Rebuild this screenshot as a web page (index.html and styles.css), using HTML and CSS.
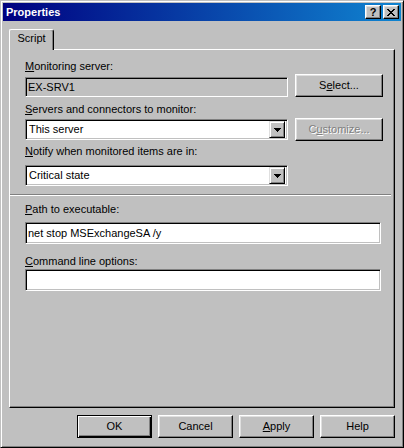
FILE: index.html
```html
<!DOCTYPE html>
<html>
<head>
<meta charset="utf-8">
<title>Properties</title>
<link rel="stylesheet" href="styles.css">
</head>
<body>
<div class="window">
  <div class="titlebar">
    <span class="title">Properties</span>
    <div class="caption-btns">
      <span class="cbtn help">?</span>
      <span class="cbtn close">
        <svg width="8" height="7" viewBox="0 0 8 7" shape-rendering="crispEdges"><path d="M0 0h2v1h-2zM6 0h2v1h-2zM1 1h2v1h-2zM5 1h2v1h-2zM2 2h4v1h-4zM3 3h2v1h-2zM2 4h4v1h-4zM1 5h2v1h-2zM5 5h2v1h-2zM0 6h2v1h-2zM6 6h2v1h-2z" fill="#000"/></svg>
      </span>
    </div>
  </div>
  <div class="client">
    <div class="tabs"><div class="tab">Script</div></div>
    <div class="panel">
      <div class="label l1"><u>M</u>onitoring server:</div>
      <div class="row r1">
        <div class="field readonly short">EX-SRV1</div>
        <div class="btn side">S<u>e</u>lect...</div>
      </div>
      <div class="label l2"><u>S</u>ervers and connectors to monitor:</div>
      <div class="row r2">
        <div class="combo short c2">
          <span class="value">This server</span>
          <span class="drop"><svg width="7" height="4" viewBox="0 0 7 4" shape-rendering="crispEdges"><path d="M0 0h7v1h-7zM1 1h5v1h-5zM2 2h3v1h-3zM3 3h1v1h-1z" fill="#000"/></svg></span>
        </div>
        <div class="btn side disabled">C<u>u</u>stomize...</div>
      </div>
      <div class="label l3"><u>N</u>otify when monitored items are in:</div>
      <div class="combo short c3">
        <span class="value">Critical state</span>
        <span class="drop"><svg width="7" height="4" viewBox="0 0 7 4" shape-rendering="crispEdges"><path d="M0 0h7v1h-7zM1 1h5v1h-5zM2 2h3v1h-3zM3 3h1v1h-1z" fill="#000"/></svg></span>
      </div>
      <div class="separator"></div>
      <div class="label l4"><u>P</u>ath to executable:</div>
      <div class="field edit e4">net stop MSExchangeSA /y</div>
      <div class="label l5"><u>C</u>ommand line options:</div>
      <div class="field edit e5"></div>
    </div>
    <div class="buttons">
      <div class="btn default">OK</div>
      <div class="btn">Cancel</div>
      <div class="btn"><u>A</u>pply</div>
      <div class="btn">Help</div>
    </div>
  </div>
</div>
</body>
</html>
```
FILE: styles.css
```css
* { box-sizing: border-box; }
html, body { margin: 0; padding: 0; background: #c0c0c0; }
body {
  font-family: "Liberation Sans", Arial, sans-serif;
  font-size: 11px;
  line-height: 13px;
  color: #000;
}
u { text-decoration: underline; text-underline-offset: 1px; }

.window {
  width: 404px;
  height: 448px;
  background: #c0c0c0;
  border: 1px solid;
  border-color: #c0c0c0 #000 #000 #c0c0c0;
  box-shadow: inset 1px 1px #fff, inset -1px -1px #808080;
  padding: 2px;
  display: flex;
  flex-direction: column;
}

.titlebar {
  height: 18px;
  background: linear-gradient(90deg, #000080, #1084d0);
  display: flex;
  align-items: center;
  justify-content: space-between;
  padding: 0 2px 0 3px;
}
.title { color: #fff; font-weight: bold; font-size: 11px; }
.caption-btns { display: flex; gap: 2px; }
.cbtn {
  width: 16px;
  height: 14px;
  background: #c0c0c0;
  border: 1px solid;
  border-color: #fff #000 #000 #fff;
  box-shadow: inset -1px -1px #808080, inset 1px 1px #dfdfdf;
  display: flex;
  align-items: center;
  justify-content: center;
}
.cbtn.help { font-weight: bold; font-size: 11px; line-height: 12px; padding-top: 0; }

.client {
  flex: 1;
  display: flex;
  flex-direction: column;
  padding: 8px 6px 0 6px;
}
.tabs { display: flex; height: 20px; position: relative; z-index: 1; }
.tab {
  width: 45px;
  height: 21px;
  background: #c0c0c0;
  border-left: 1px solid #fff;
  border-top: 1px solid #fff;
  border-right: 1px solid #000;
  border-radius: 2px 3px 0 0;
  box-shadow: inset -1px 0 #808080;
  text-align: center;
  padding-top: 2px;
}

.panel {
  height: 359px;
  border: 1px solid;
  border-color: #fff #000 #000 #fff;
  box-shadow: inset -1px -1px #808080;
  padding: 10px 0 0 15px;
  display: flex;
  flex-direction: column;
  align-items: flex-start;
}
.label { height: 13px; white-space: nowrap; }
.row { display: flex; align-items: flex-start; }

.l1 { margin-top: 0; }
.r1 { margin-top: 1px; }
.r1 .field { margin-top: 3px; height: 20px; }
.l2 { margin-top: 6px; }
.r2 { margin-top: 2px; }
.r2 .combo { margin-top: 1px; }
.l3 { margin-top: 4px; }
.c3 { margin-top: 7px; }
.separator {
  margin-top: 8px;
  margin-left: -15px;
  width: 381px;
  height: 2px;
  border-top: 1px solid #808080;
  border-bottom: 1px solid #fff;
}
.l4 { margin-top: 7px; }
.e4 { margin-top: 6px; }
.l5 { margin-top: 11px; }
.e5 { margin-top: 1px; }

.field, .combo {
  border: 1px solid;
  border-color: #808080 #fff #fff #808080;
  box-shadow: inset 1px 1px #000, inset -1px -1px #c0c0c0;
  background: #fff;
  padding: 0 2px;
  display: flex;
  align-items: center;
  white-space: nowrap;
}
.field.readonly { background: #c0c0c0; }
.short { width: 263px; }
.edit { width: 356px; height: 22px; }
.combo { height: 21px; padding: 2px 2px 2px 2px; }
.combo .value { flex: 1; padding-left: 1px; }
.drop {
  width: 16px;
  height: 17px;
  background: #c0c0c0;
  border: 1px solid;
  border-color: #dfdfdf #000 #000 #dfdfdf;
  box-shadow: inset 1px 1px #fff, inset -1px -1px #808080;
  display: flex;
  align-items: center;
  justify-content: center;
  padding-left: 1px;
}

.btn {
  height: 23px;
  width: 75px;
  background: #c0c0c0;
  border: 1px solid;
  border-color: #fff #000 #000 #fff;
  box-shadow: inset -1px -1px #808080, inset 1px 1px #dfdfdf;
  display: flex;
  align-items: center;
  justify-content: center;
  white-space: nowrap;
}
.btn.side { width: 88px; margin-left: 7px; }
.btn.disabled { color: #808080; text-shadow: 1px 1px #fff; }
.btn.default {
  border: 1px solid #000;
  box-shadow: inset 1px 1px #fff, inset -1px -1px #000, inset -2px -2px #808080;
}

.buttons {
  display: flex;
  justify-content: flex-end;
  gap: 6px;
  margin-top: 7px;
}
```
